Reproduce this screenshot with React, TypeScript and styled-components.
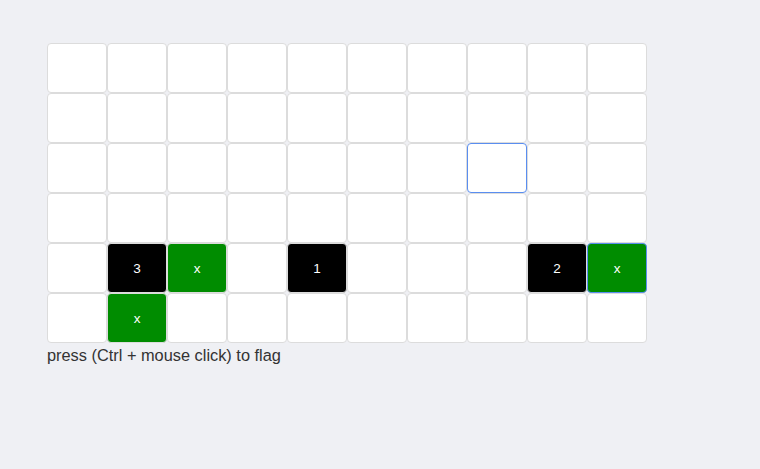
import styled, { createGlobalStyle } from "styled-components";

type CellKind = "hidden" | "open" | "flag";

type CellData = {
    kind: CellKind;
    label?: string;
    focused?: boolean;
};

const ROWS = 6;
const COLS = 10;

const special: Record<string, CellData> = {
    "2-7": { kind: "hidden", focused: true },
    "4-1": { kind: "open", label: "3" },
    "4-2": { kind: "flag", label: "x" },
    "4-4": { kind: "open", label: "1" },
    "4-8": { kind: "open", label: "2" },
    "4-9": { kind: "flag", label: "x", focused: true },
    "5-1": { kind: "flag", label: "x" },
};

function App() {
    const rows = [];
    for (let r = 0; r < ROWS; r++) {
        const cells = [];
        for (let c = 0; c < COLS; c++) {
            const cell = special[`${r}-${c}`] ?? { kind: "hidden" };
            cells.push(
                <Cell key={c} $kind={cell.kind} $focused={!!cell.focused}>
                    {cell.label}
                </Cell>
            );
        }
        rows.push(<Row key={r}>{cells}</Row>);
    }

    return (
        <>
            <GlobalStyle />
            <Page>
                <Board>{rows}</Board>
                <Hint>press (Ctrl + mouse click) to flag</Hint>
            </Page>
        </>
    );
}

const GlobalStyle = createGlobalStyle`
    body {
        margin: 0;
        background: #eff0f4;
        font-family: "Liberation Sans", Arial, sans-serif;
    }
`

const Page = styled.div`
    padding: 43px 47px;
`

const Board = styled.div`
    display: flex;
    flex-direction: column;
    width: 600px;
`

const Row = styled.div`
    display: flex;
`

const cellColors: Record<CellKind, string> = {
    hidden: "#ffffff",
    open: "#000000",
    flag: "#008c00",
};

const Cell = styled.div<{ $kind: CellKind; $focused: boolean }>`
    box-sizing: border-box;
    width: 60px;
    height: 50px;
    border: 1px solid ${(p) => (p.$focused ? "#5a8ef0" : "#dcdcdc")};
    border-radius: 4px;
    background: ${(p) => cellColors[p.$kind]};
    color: #ffffff;
    font-size: 13.5px;
    display: flex;
    align-items: center;
    justify-content: center;
`

const Hint = styled.p`
    margin: 3px 0 0;
    font-size: 16.35px;
    color: #333333;
`

export default App;
